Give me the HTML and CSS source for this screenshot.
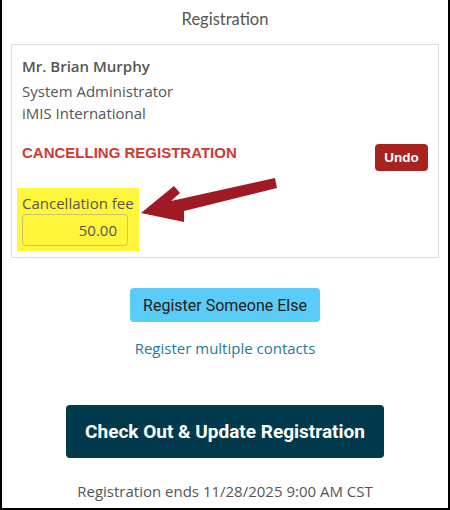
FILE: index.html
```html
<!DOCTYPE html>
<html lang="en">
<head>
    <meta charset="UTF-8">
    <meta name="viewport" content="width=device-width, initial-scale=1.0">
    <title>Registration</title>
    <link rel="stylesheet" href="styles.css">
</head>
<body>
    <div class="frame">
        <h1 class="title">Registration</h1>
        <div class="card">
            <div class="name">Mr. Brian Murphy</div>
            <div class="line">System Administrator</div>
            <div class="line">iMIS International</div>
            <div class="status-row">
                <span class="status">CANCELLING REGISTRATION</span>
                <button class="undo">Undo</button>
            </div>
            <div class="fee-box">
                <label class="fee-label" for="fee">Cancellation fee</label>
                <input class="fee-input" id="fee" type="text" value="50.00">
            </div>
        </div>
        <div class="actions">
            <button class="btn-other">Register Someone Else</button>
            <a class="link" href="#">Register multiple contacts</a>
            <button class="btn-checkout">Check Out &amp; Update Registration</button>
            <p class="ends">Registration ends 11/28/2025 9:00 AM CST</p>
        </div>
        <svg class="arrow" width="450" height="510" viewBox="0 0 450 510">
            <polygon points="141,213 174,186 180,193 171,201 275,178 277,188 184,211 184,222" fill="#a01a24"/>
        </svg>
    </div>
</body>
</html>
```

FILE: styles.css
```css
* {
    box-sizing: border-box;
}
body {
    margin: 0;
    font-family: "Open Sans", Arial, sans-serif;
    color: #555;
    background-color: white;
}
.frame {
    position: relative;
    width: 450px;
    height: 510px;
    border-left: 2px solid #000;
    border-right: 2px solid #000;
    border-bottom: 2px solid #000;
    padding: 8px 9px 0 9px;
}
.title {
    margin: 0 0 14px 0;
    font-family: Lato, sans-serif;
    font-weight: normal;
    font-size: 16.5px;
    line-height: 22px;
    text-align: center;
    color: #555;
}
.card {
    border: 1px solid #ddd;
    padding: 10px 10px 6px 10px;
    font-size: 15px;
}
.name {
    font-weight: 600;
    line-height: 22px;
    margin-bottom: 3px;
}
.line {
    line-height: 22px;
}
.status-row {
    display: flex;
    justify-content: space-between;
    align-items: flex-start;
    margin-top: 19px;
}
.status {
    font-family: "Liberation Sans", Arial, sans-serif;
    font-weight: bold;
    font-size: 15px;
    line-height: 20px;
    color: #cf3a30;
}
.undo {
    margin-top: 1px;
    height: 27px;
    width: 53px;
    padding: 0;
    border: none;
    border-radius: 4px;
    background-color: #a8231f;
    color: white;
    font-family: "Liberation Sans", Arial, sans-serif;
    font-weight: bold;
    font-size: 13.5px;
}
.fee-box {
    display: inline-flex;
    flex-direction: column;
    margin: 17px 0 0 -5px;
    padding: 5px;
    width: 122px;
    background-color: #fff53b;
}
.fee-label {
    line-height: 21px;
}
.fee-input {
    width: 106px;
    height: 32px;
    padding: 0 10px;
    border: 1px solid #c9c36a;
    border-radius: 4px;
    background-color: transparent;
    font-family: "Open Sans", Arial, sans-serif;
    font-size: 15px;
    color: #555;
    text-align: right;
}
.actions {
    display: flex;
    flex-direction: column;
    align-items: center;
    margin-top: 30px;
}
.btn-other {
    width: 190px;
    height: 34px;
    border: none;
    border-radius: 4px;
    background-color: #5bcbf7;
    color: #222;
    font-family: Roboto, sans-serif;
    font-size: 16px;
}
.link {
    margin-top: 16px;
    line-height: 20px;
    font-size: 15px;
    color: #1f7a9e;
    text-decoration: none;
}
.btn-checkout {
    margin-top: 47px;
    width: 318px;
    height: 53px;
    border: none;
    border-radius: 4px;
    background-color: #003a4c;
    color: white;
    font-family: Roboto, sans-serif;
    font-weight: bold;
    font-size: 19px;
}
.ends {
    margin: 23px 0 0 0;
    line-height: 20px;
    font-size: 15px;
}
.arrow {
    position: absolute;
    top: 0;
    left: -2px;
}
```
